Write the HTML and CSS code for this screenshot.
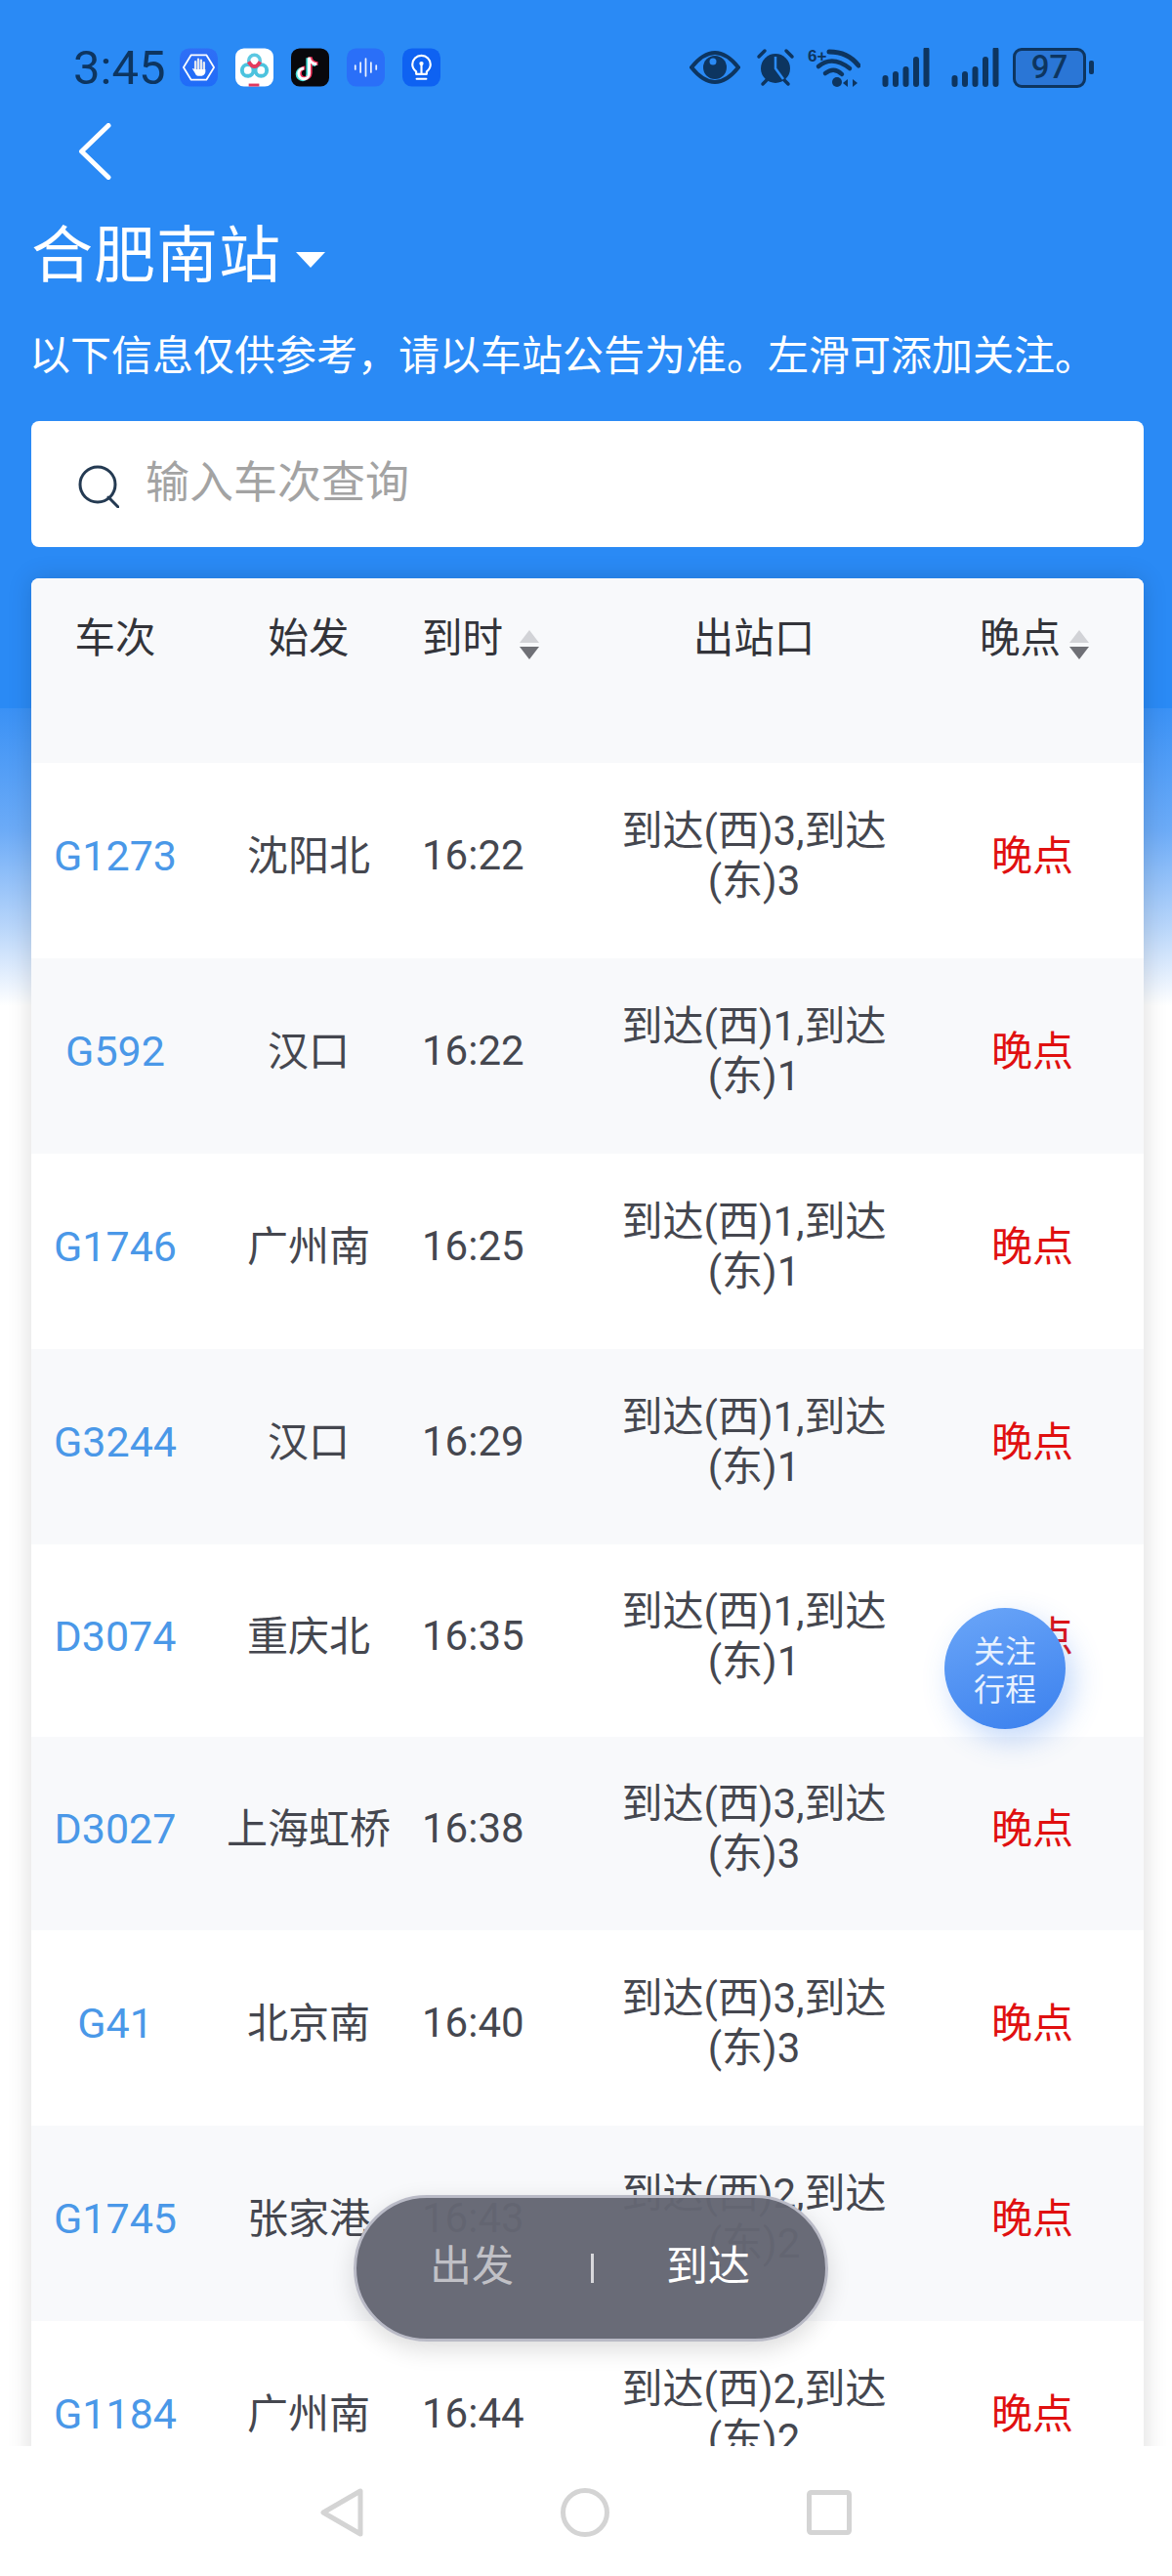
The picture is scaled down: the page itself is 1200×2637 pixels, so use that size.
FILE: index.html
```html
<!DOCTYPE html>
<html lang="zh-CN">
<head>
<meta charset="utf-8">
<title>合肥南站</title>
<link rel="stylesheet" href="styles.css">
</head>
<body>
<div class="page">
  <main class="content">
    <div class="status">
      <span class="time">3:45</span>
      <div class="app-icons">
        <svg class="app" viewBox="0 0 40 40"><defs><linearGradient id="a1" x1="0" y1="0" x2="0" y2="1"><stop offset="0" stop-color="#2f6ff6"/><stop offset="1" stop-color="#1f6cf8"/></linearGradient></defs><rect width="40" height="40" rx="10" fill="url(#a1)"/><path d="M12 7 H28 L36 20 L28 33 H12 L4 20 Z" fill="none" stroke="#fff" stroke-width="1.800" stroke-linejoin="round"/><path d="M16.500 14 V22 M19.500 11.500 V22 M22.500 12.500 V22 M25.500 15 V23" stroke="#e4e8f0" stroke-width="2.400" stroke-linecap="round" fill="none"/><path d="M13 21 L17 22 H27 V25 Q26 29 21 29 H19 Q17 29 16 26 Z" fill="#fff"/></svg>
        <svg class="app" viewBox="0 0 40 40"><rect width="40" height="40" rx="9" fill="#fff"/><circle cx="13" cy="23" r="6" fill="none" stroke="#4cc3de" stroke-width="4"/><circle cx="27" cy="23" r="6" fill="none" stroke="#4cc3de" stroke-width="4"/><circle cx="20" cy="13" r="6" fill="none" stroke="#5cc8e2" stroke-width="3.500"/><path d="M14 14 Q20 24 26 14" fill="none" stroke="#e63a5e" stroke-width="4"/><rect x="14" y="37" width="11" height="3" fill="#e0395f"/></svg>
        <svg class="app" viewBox="0 0 40 40"><rect width="40" height="40" rx="9" fill="#08080c"/><path d="M19 9 V26 a5.500 5.500 0 1 1 -5.500 -5.500 M19 9 c0 4 3.500 7 8 7" transform="translate(-1.200 1)" fill="none" stroke="#47e0dc" stroke-width="4"/><path d="M19 9 V26 a5.500 5.500 0 1 1 -5.500 -5.500 M19 9 c0 4 3.500 7 8 7" transform="translate(1.200 0)" fill="none" stroke="#f0335a" stroke-width="4"/><path d="M19 9 V26 a5.500 5.500 0 1 1 -5.500 -5.500 M19 9 c0 4 3.500 7 8 7" transform="translate(0 .500)" fill="none" stroke="#fff" stroke-width="3"/></svg>
        <svg class="app" viewBox="0 0 40 40"><rect width="40" height="40" rx="10" fill="#2a6ff8"/><path d="M9 18 v4 M14.500 15 v10 M20 11 v18 M25.500 15 v10 M31 18 v4" stroke="#fff" stroke-width="1.800" stroke-linecap="round" fill="none" opacity=".9"/></svg>
        <svg class="app" viewBox="0 0 40 40"><rect width="40" height="40" rx="10" fill="#0e62f2"/><path d="M14.500 27 V24.500 C12 22.500 10.500 20 10.500 17 A9.500 9.500 0 0 1 29.500 17 C29.500 20 28 22.500 25.500 24.500 V27 Z M15 32 H25" fill="none" stroke="#fff" stroke-width="2.200" stroke-linejoin="round" stroke-linecap="round"/><path d="M20 27 V17" stroke="#fff" stroke-width="2.200"/><circle cx="20" cy="16" r="2.200" fill="#fff"/></svg>
      </div>
      <div class="sys-icons">
        <svg class="sys-eye" viewBox="0 0 52 36"><path d="M2 18 Q14 3 26 3 Q38 3 50 18 Q38 33 26 33 Q14 33 2 18 Z" fill="none" stroke="#0d3560" stroke-width="4"/><circle cx="26" cy="18" r="12" fill="#0d3560"/><circle cx="24" cy="12" r="3.500" fill="#2a8af5"/></svg>
        <svg class="sys-alarm" viewBox="0 0 42 40"><circle cx="21" cy="21" r="15" fill="#0d3560"/><path d="M4 9 L10 3 M38 9 L32 3 M8 37 L12 33 M34 37 L30 33" stroke="#0d3560" stroke-width="3.500" stroke-linecap="round"/><path d="M21 9 V21 L29 32" fill="none" stroke="#2a8af5" stroke-width="2.500"/></svg>
        <svg class="sys-wifi" viewBox="0 0 54 40"><text x="0" y="14" class="wifi-gen">6+</text><path d="M22 4 Q41 4 52 18" fill="none" stroke="#0d3560" stroke-width="5" stroke-linecap="round"/><path d="M12 20 Q26 8 44 22" fill="none" stroke="#0d3560" stroke-width="4.500" stroke-linecap="round" transform="translate(-1 -1)"/><path d="M20 27 Q29 20 37 28" fill="none" stroke="#0d3560" stroke-width="4.500" stroke-linecap="round" transform="translate(-2 -1)"/><circle cx="30" cy="35" r="5" fill="#0d3560"/><path d="M36 36 L41 32 V40 Z M46 32 L51 36 L46 40 Z" fill="#0d3560"/></svg>
        <svg class="sys-signal" viewBox="0 0 49 40"><path d="M3.500 31 V37 M14 27 V37 M24.500 22 V37 M35 12 V37 M45.500 2 V37" stroke="#0d3560" stroke-width="6" stroke-linecap="round"/></svg>
        <svg class="sys-signal" viewBox="0 0 49 40"><path d="M3.500 31 V37 M14 27 V37 M24.500 22 V37 M35 12 V37 M45.500 2 V37" stroke="#0d3560" stroke-width="6" stroke-linecap="round"/></svg>
        <div class="battery"><span class="battery-body">97</span><span class="battery-nub"></span></div>
      </div>
    </div>

    <svg class="back" viewBox="0 0 34 58"><path d="M31 2.500 L3.500 29 L31 55.500" fill="none" stroke="#fff" stroke-width="5" stroke-linecap="round" stroke-linejoin="round"/></svg>
    <div class="title-row"><h1 class="title">合肥南站</h1><span class="caret"></span></div>
    <p class="notice">以下信息仅供参考，请以车站公告为准。左滑可添加关注。</p>

    <div class="search">
      <svg class="search-icon" viewBox="0 0 42 44"><circle cx="20" cy="20" r="18" fill="none" stroke="#243a52" stroke-width="3"/><path d="M31 33 L41 43" stroke="#243a52" stroke-width="3" stroke-linecap="round"/></svg>
      <span class="placeholder">输入车次查询</span>
    </div>

    <section class="table">
      <div class="thead">
        <div class="cell">车次</div>
        <div class="cell">始发</div>
        <div class="cell cell-time">到时<span class="sort sort-wide"></span></div>
        <div class="cell">出站口</div>
        <div class="cell cell-late">晚点<span class="sort"></span></div>
      </div>
      <div class="row"><div class="cell train">G1273</div><div class="cell origin">沈阳北</div><div class="cell cell-time">16:22</div><div class="cell exit">到达(西)3,到达(东)3</div><div class="cell cell-late late">晚点</div></div>
      <div class="row alt"><div class="cell train">G592</div><div class="cell origin">汉口</div><div class="cell cell-time">16:22</div><div class="cell exit">到达(西)1,到达(东)1</div><div class="cell cell-late late">晚点</div></div>
      <div class="row"><div class="cell train">G1746</div><div class="cell origin">广州南</div><div class="cell cell-time">16:25</div><div class="cell exit">到达(西)1,到达(东)1</div><div class="cell cell-late late">晚点</div></div>
      <div class="row alt"><div class="cell train">G3244</div><div class="cell origin">汉口</div><div class="cell cell-time">16:29</div><div class="cell exit">到达(西)1,到达(东)1</div><div class="cell cell-late late">晚点</div></div>
      <div class="row short"><div class="cell train">D3074</div><div class="cell origin">重庆北</div><div class="cell cell-time">16:35</div><div class="cell exit">到达(西)1,到达(东)1</div><div class="cell cell-late late">晚点</div></div>
      <div class="row alt short"><div class="cell train">D3027</div><div class="cell origin">上海虹桥</div><div class="cell cell-time">16:38</div><div class="cell exit">到达(西)3,到达(东)3</div><div class="cell cell-late late">晚点</div></div>
      <div class="row"><div class="cell train">G41</div><div class="cell origin">北京南</div><div class="cell cell-time">16:40</div><div class="cell exit">到达(西)3,到达(东)3</div><div class="cell cell-late late">晚点</div></div>
      <div class="row alt"><div class="cell train">G1745</div><div class="cell origin">张家港</div><div class="cell cell-time">16:43</div><div class="cell exit">到达(西)2,到达(东)2</div><div class="cell cell-late late">晚点</div></div>
      <div class="row"><div class="cell train">G1184</div><div class="cell origin">广州南</div><div class="cell cell-time">16:44</div><div class="cell exit">到达(西)2,到达(东)2</div><div class="cell cell-late late">晚点</div></div>
    </section>
  </main>

  <nav class="navbar">
    <svg class="nav-back" viewBox="0 0 44 50"><path d="M41 3 V47 L3 25 Z" fill="none" stroke="#d4d4d4" stroke-width="5" stroke-linejoin="round"/></svg>
    <svg class="nav-home" viewBox="0 0 50 50"><circle cx="25" cy="25" r="22.500" fill="none" stroke="#d4d4d4" stroke-width="5"/></svg>
    <svg class="nav-recent" viewBox="0 0 46 46"><rect x="2.500" y="2.500" width="41" height="41" rx="2" fill="none" stroke="#d4d4d4" stroke-width="5"/></svg>
  </nav>

  <div class="fab">关注<br>行程</div>
  <div class="pill">
    <span class="pill-item pill-off">出发</span>
    <span class="pill-sep"></span>
    <span class="pill-item">到达</span>
  </div>
</div>
</body>
</html>
```
FILE: styles.css
```css
* { box-sizing: border-box; }
html, body { margin: 0; padding: 0; }
body { font-family: "Noto Sans CJK SC", "Noto Sans", sans-serif; }

.page {
  position: relative;
  width: 1200px;
  height: 2637px;
  overflow: hidden;
  display: flex;
  flex-direction: column;
  background: #fff;
}

.content {
  flex: 1;
  min-height: 0;
  overflow: hidden;
  padding: 0 29px 0 32px;
  background: linear-gradient(#2a8af5 0, #2a8af5 725px, #3a91f5 725px, #6cabf7 850px, #b9d6fa 950px, #fff 1030px);
}

/* status bar */
.status {
  display: flex;
  align-items: center;
  height: 40px;
  margin: 49px -29px 0 -32px;
  padding-left: 75px;
}
.time {
  font-family: Roboto, sans-serif;
  font-size: 49px;
  line-height: 40px;
  color: #0d3560;
  width: 109px;
  padding-top: 2px;
}
.app-icons { display: flex; gap: 18px; }
.app { width: 39px; height: 40px; display: block; }
.sys-icons {
  position: relative;
  margin-left: auto;
  margin-right: 80px;
  display: flex;
  align-items: center;
}
.sys-eye { width: 52px; height: 36px; margin-right: 15px; }
.sys-alarm { width: 42px; height: 40px; margin-right: 12px; }
.sys-wifi { width: 54px; height: 40px; margin-right: 22px; }
.sys-signal { width: 49px; height: 40px; margin-right: 22px; }
.sys-signal + .sys-signal { margin-right: 14px; }
.wifi-gen { font-family: "Liberation Sans", sans-serif; font-size: 17px; font-weight: 700; fill: #0d3560; }
.battery { display: flex; align-items: center; gap: 3px; }
.battery-body {
  width: 75px;
  height: 41px;
  border: 3.500px solid #0d3560;
  border-radius: 9px;
  background: #2a76d6;
  color: #0d3560;
  font-family: Roboto, sans-serif;
  font-size: 33px;
  font-weight: 500;
  line-height: 34px;
  text-align: center;
}
.battery-nub { width: 5px; height: 14px; background: #0d3560; border-radius: 2px; }

/* heading */
.back { display: block; width: 34px; height: 58px; margin: 37px 0 0 48px; }
.title-row { display: flex; align-items: center; margin-top: 36px; height: 72px; }
.title {
  margin: 0;
  font-size: 63px;
  font-weight: 400;
  line-height: 72px;
  color: #fff;
  letter-spacing: 1px;
}
.caret {
  margin: 20px 0 0 15px;
  width: 0;
  height: 0;
  border-left: 15px solid transparent;
  border-right: 15px solid transparent;
  border-top: 16px solid #fff;
}
.notice {
  margin: 41px 0 0 -2px;
  font-size: 42px;
  line-height: 56px;
  color: #fff;
  white-space: nowrap;
}

/* search */
.search {
  display: flex;
  align-items: center;
  height: 129px;
  margin-top: 42px;
  padding-left: 48px;
  background: #fff;
  border-radius: 8px;
}
.search-icon { width: 42px; height: 44px; margin-top: 4px; }
.placeholder { margin-left: 27px; font-size: 45px; line-height: 60px; color: #a3a3a3; margin-top: -10px; }

/* table */
.table {
  margin-top: 32px;
  border-radius: 8px 8px 0 0;
  background: #fff;
  box-shadow: 0 0 26px rgba(0, 0, 0, .14);
}
.thead, .row {
  display: grid;
  grid-template-columns: 172px 224px 189px 310px 244px;
  font-size: 42px;
  color: #45474f;
}
.thead {
  height: 189px;
  padding-top: 29px;
  align-items: start;
  background: #f8f9fb;
  border-radius: 8px 8px 0 0;
  color: #33343a;
  font-size: 41.500px;
}
.row { height: 200px; align-items: center; padding-bottom: 10px; }
.short { height: 197px; }
.alt.short { height: 198px; }
.alt { background: #f8f9fb; }
.cell { text-align: center; line-height: 58px; }
.origin, .late { padding-bottom: 6px; }
.cell-time {
  text-align: left;
  padding-left: 4px;
  font-family: Roboto, "Noto Sans CJK SC", sans-serif;
  white-space: nowrap;
}
.cell-late { padding-left: 16px; }
.thead .cell-time { font-family: "Noto Sans CJK SC", sans-serif; }
.thead .cell-late { padding-left: 0; text-align: left; margin-left: 76px; white-space: nowrap; }
.train { color: #4a98e8; font-family: Roboto, sans-serif; font-size: 43px; }
.late { color: #e01010; }
.exit { line-height: 51px; padding: 0 8px; font-family: Roboto, "Noto Sans CJK SC", sans-serif; }

.sort {
  display: inline-block;
  position: relative;
  width: 21px;
  height: 30px;
  margin-left: 9px;
  vertical-align: -7px;
}
.sort-wide { margin-left: 17px; }
.sort::before, .sort::after {
  content: "";
  position: absolute;
  left: 0;
  border-left: 10.500px solid transparent;
  border-right: 10.500px solid transparent;
}
.sort::before { top: 0; border-bottom: 13px solid #d2d3d7; }
.sort::after { bottom: 0; border-top: 13px solid #6f7076; }

/* bottom nav */
.navbar {
  flex: none;
  height: 133px;
  background: #fff;
  display: flex;
  justify-content: center;
  align-items: center;
  gap: 202px;
  padding-top: 3px;
}
.nav-back { width: 44px; height: 50px; }
.nav-home { width: 50px; height: 50px; }
.nav-recent { width: 46px; height: 46px; }

/* floating */
.fab {
  position: absolute;
  left: 967px;
  top: 1646px;
  width: 124px;
  height: 124px;
  border-radius: 50%;
  display: flex;
  align-items: center;
  justify-content: center;
  text-align: center;
  font-size: 32px;
  line-height: 39px;
  color: #e8f1fe;
  background: linear-gradient(160deg, #6ba6f8, #3a80ee);
  box-shadow: 8px 12px 30px rgba(58, 128, 238, .3);
}
.pill {
  position: absolute;
  left: 362px;
  top: 2247px;
  width: 486px;
  height: 150px;
  border: 3px solid #b9bac6;
  border-radius: 75px;
  background: rgba(100, 102, 115, .97);
  box-shadow: 0 8px 24px rgba(0, 0, 0, .14);
  display: flex;
  align-items: center;
  padding: 0 0 12px 75px;
}
.pill-item { font-size: 43px; line-height: 60px; color: #fff; width: 88px; }
.pill-off { color: #c0c0c6; }
.pill-sep { width: 3px; height: 30px; margin: 12px 74px 0 77px; background: #d8d8dc; }
```
